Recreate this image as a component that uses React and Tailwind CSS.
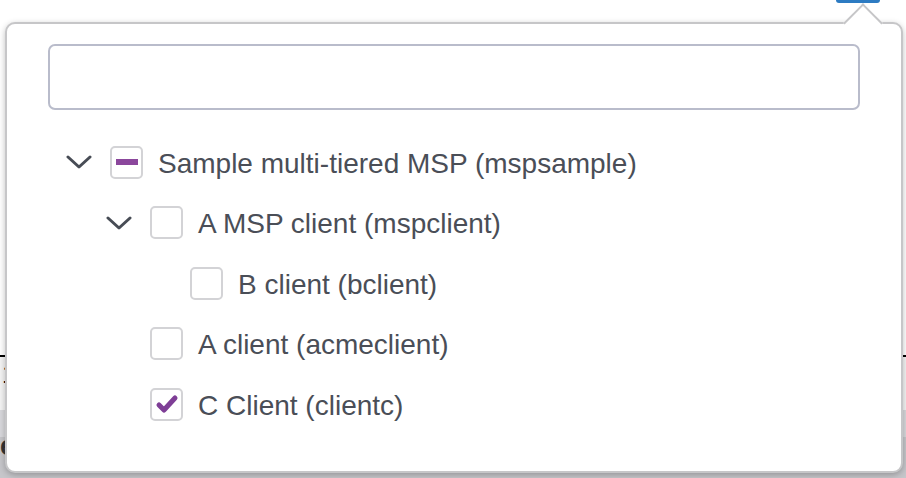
const nodes = [
  { label: 'Sample multi-tiered MSP (mspsample)', level: 0, expander: true, state: 'partial' },
  { label: 'A MSP client (mspclient)', level: 1, expander: true, state: 'off' },
  { label: 'B client (bclient)', level: 2, expander: false, state: 'off' },
  { label: 'A client (acmeclient)', level: 1, expander: false, state: 'off' },
  { label: 'C Client (clientc)', level: 1, expander: false, state: 'on' },
];

const indent = ['pl-0', 'pl-[40px]', 'pl-[80px]'];

function Chevron() {
  return (
    <svg width="26" height="16" viewBox="0 0 26 16">
      <path d="M2 3 L13 13 L24 3" fill="none" stroke="#474c55" strokeWidth="3" strokeLinecap="round" strokeLinejoin="round" />
    </svg>
  );
}

function Checkbox({ state }) {
  return (
    <span className="w-[33px] h-[33px] shrink-0 rounded-[5px] border-2 border-[#d3d3d6] bg-white flex items-center justify-center">
      {state === 'partial' && <span className="block w-[22px] h-[6px] bg-[#8b479c]" />}
      {state === 'on' && (
        <svg width="24" height="20" viewBox="0 0 24 20">
          <path d="M4 11 L9 16 L20 4" fill="none" stroke="#7e3e96" strokeWidth="5" strokeLinecap="round" strokeLinejoin="round" />
        </svg>
      )}
    </span>
  );
}

function Row({ node }) {
  return (
    <div className={`h-[60.5px] flex items-center ${indent[node.level]}`}>
      <span className="w-[26px] h-[26px] shrink-0 flex items-center justify-center">
        {node.expander && <Chevron />}
      </span>
      <span className="w-[18px] shrink-0" />
      <Checkbox state={node.state} />
      <span className="ml-[15px] mt-[3px] text-[28px] text-[#4a4e57] whitespace-nowrap leading-none">{node.label}</span>
    </div>
  );
}

export default function App() {
  return (
    <div className="relative w-[906px] h-[478px] overflow-hidden bg-white" style={{ fontFamily: '"Liberation Sans", Arial, sans-serif' }}>
      {/* page behind the popover */}
      <div className="flex flex-col h-full">
        <div className="h-[372px] bg-white" />
        <div className="h-[58px] border-t-2 border-black bg-[#f4f4f4] text-[26px] text-black leading-none pt-[4px] pl-[2px]">1</div>
        <div className="h-[28px] bg-[#d8d8dc]" />
        <div className="flex-1 bg-[#c6c6ca] flex items-start text-[27px] font-bold text-[#333] leading-none">
          <span className="-mt-[4px]">e</span>
          <span className="ml-[196px] mt-[14px]">Billable Fraction</span>
          <span className="ml-[96px] mt-[14px]">Billable</span>
        </div>
      </div>

      {/* trigger button peeking at top */}
      <div className="absolute left-[836px] top-0 w-[44px] h-[3px] rounded-b-[4px] bg-[#2d7bc2]" />

      {/* popover */}
      <div className="absolute left-[5px] top-[22px] w-[898px] h-[451px] rounded-[10px] border-2 border-[#c6c6c8] bg-white shadow-[0_2px_6px_rgba(0,0,0,0.25)]">
        <div className="absolute left-[842px] -top-[15px] w-[28px] h-[28px] rotate-45 bg-white border-l-2 border-t-2 border-[#c6c6c8]" />
        <div className="relative pt-[20px] pl-[41px] pr-[41px]">
          <div className="h-[66px] rounded-[7px] border-2 border-[#b9bccb] bg-white" />
          <div className="mt-[22px] pl-[18px]">
            {nodes.map((n) => (
              <Row key={n.label} node={n} />
            ))}
          </div>
        </div>
      </div>
    </div>
  );
}
